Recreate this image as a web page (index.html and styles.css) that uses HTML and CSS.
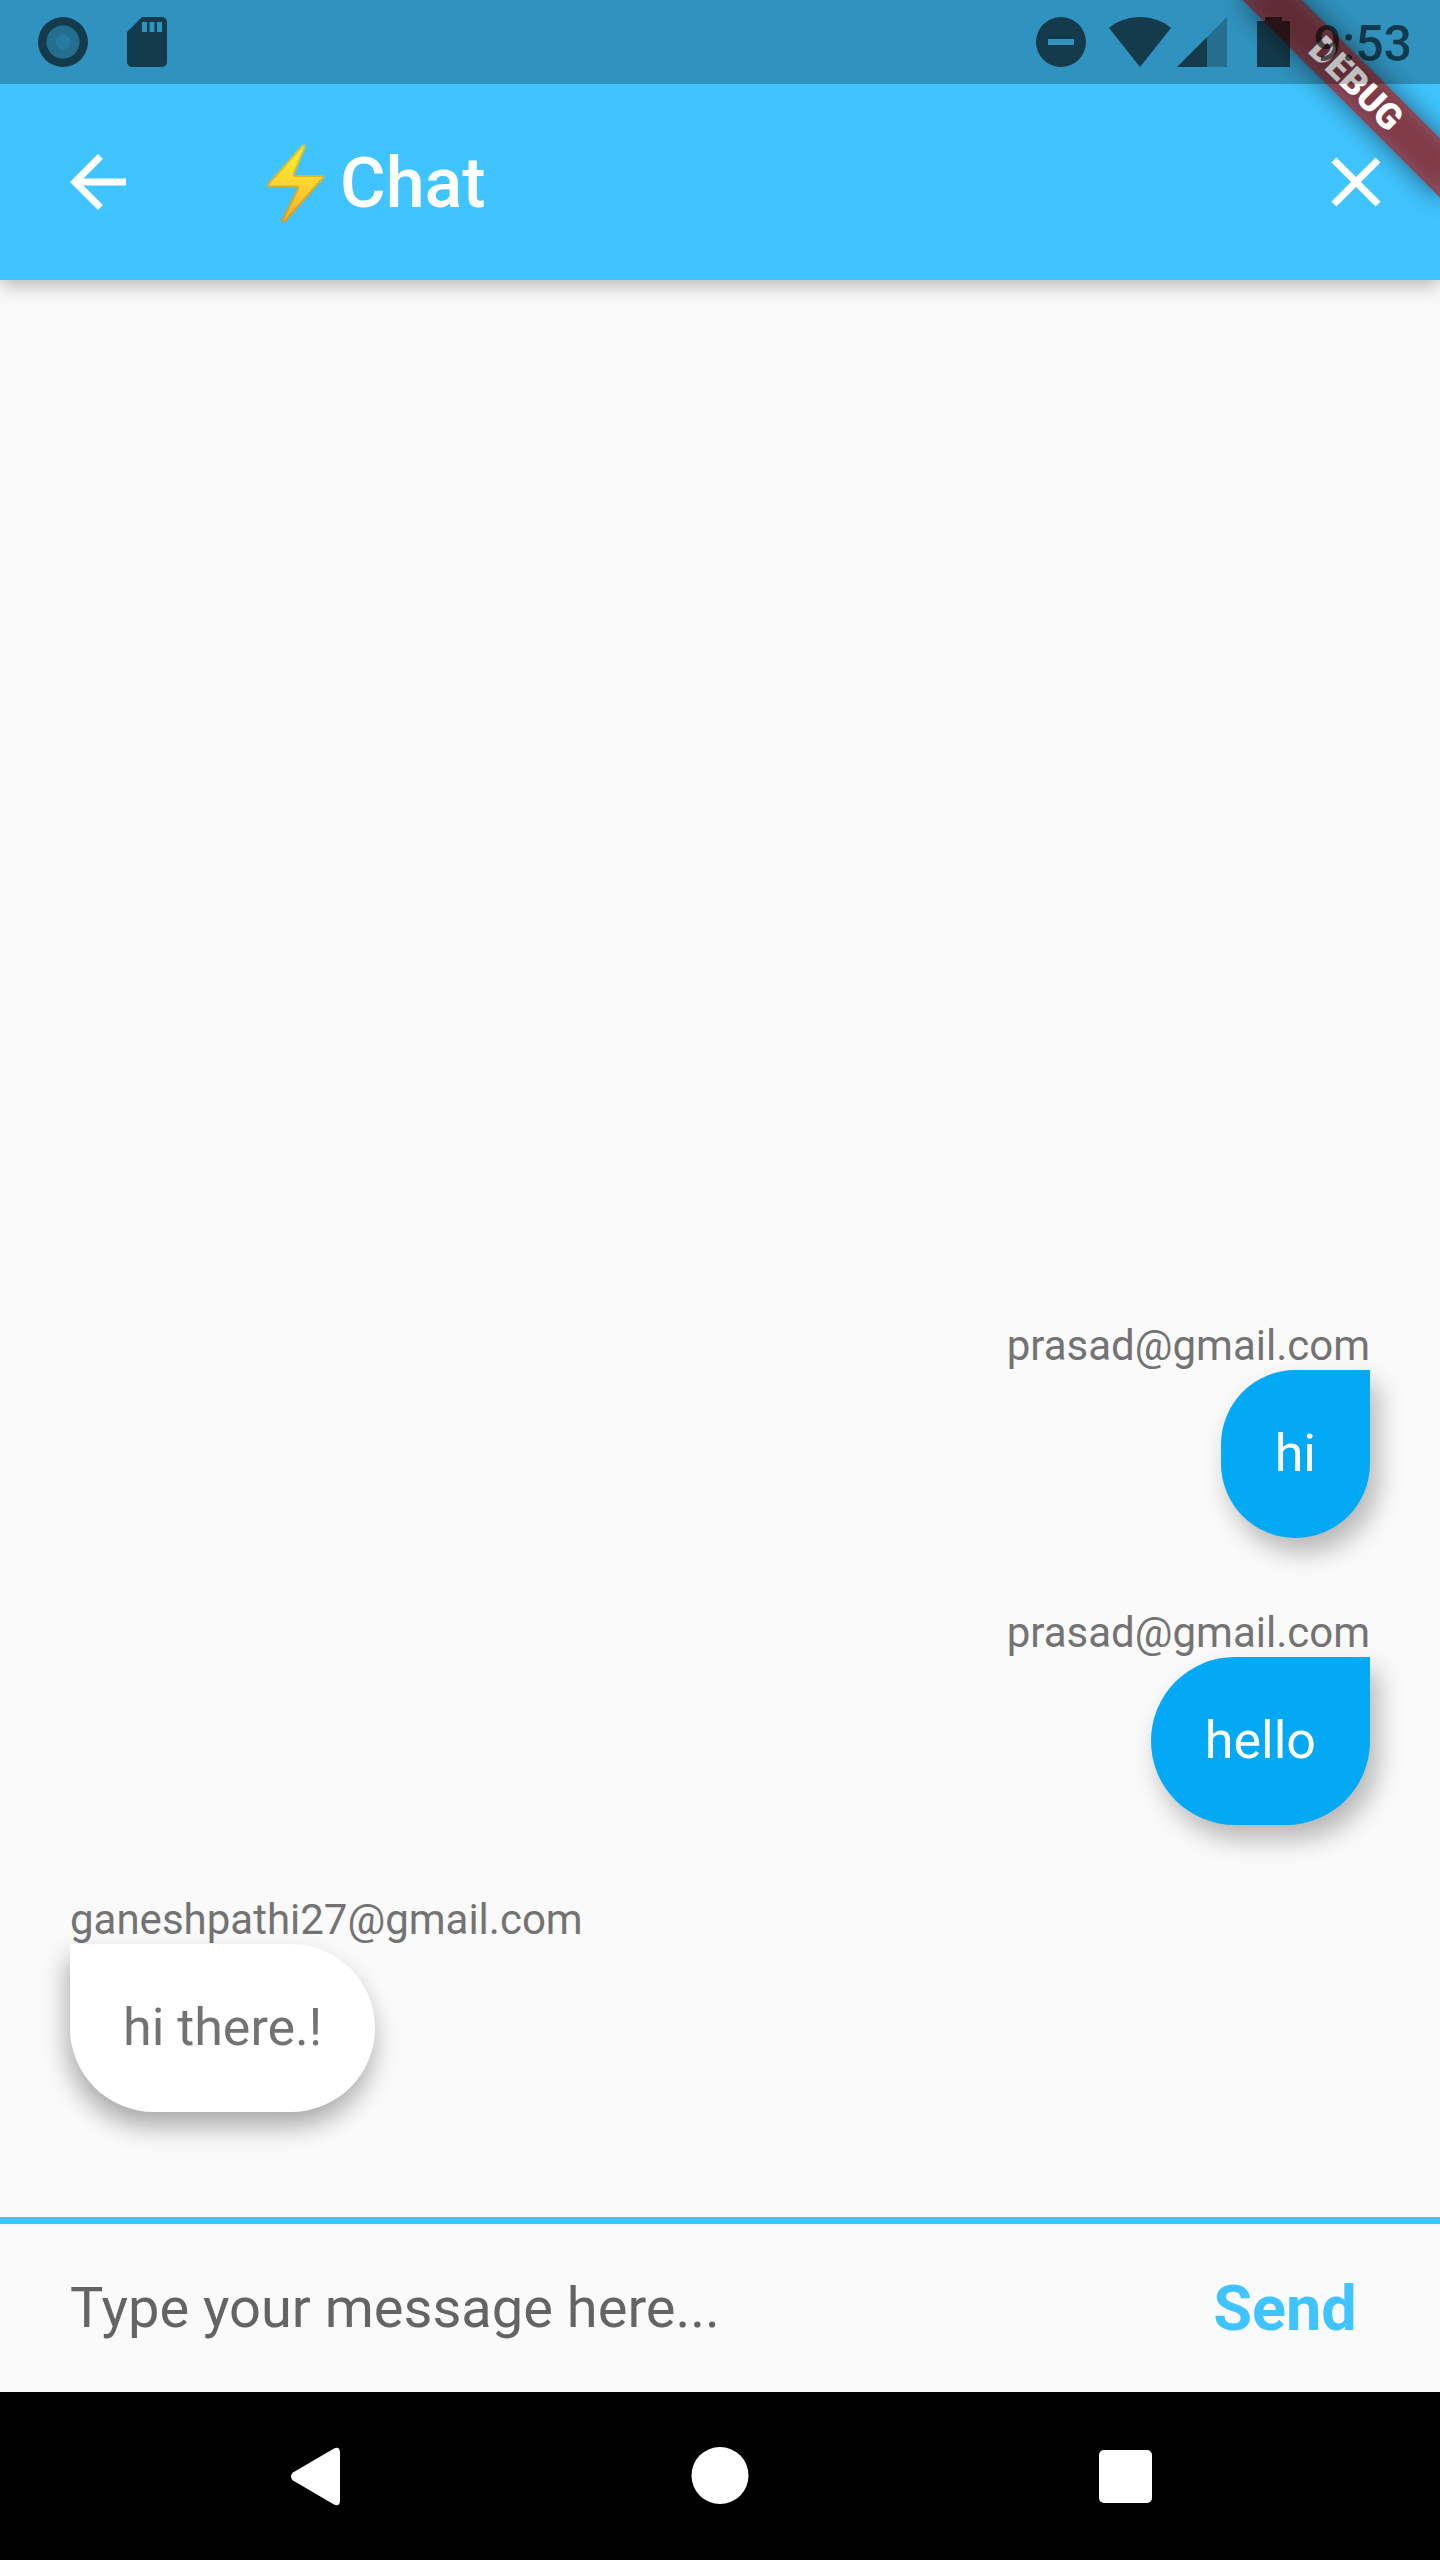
FILE: index.html
```html
<!DOCTYPE html>
<html lang="en">
<head>
<meta charset="utf-8">
<meta name="viewport" content="width=device-width, initial-scale=1">
<title>Chat</title>
<link rel="stylesheet" href="styles.css">
</head>
<body>
<div class="screen">
  <header class="top">
    <div class="status">
      <div class="status-group status-left">
        <svg class="s-icon" width="50" height="50" viewBox="0 0 50 50" aria-hidden="true">
          <path fill-rule="evenodd" fill-opacity=".6" d="M25 0a25 25 0 1 0 0 50a25 25 0 1 0 0-50zM25 8.500a16.500 16.500 0 1 1 0 33a16.500 16.500 0 1 1 0-33z"/>
          <path fill-rule="evenodd" fill-opacity=".25" d="M25 8.500a16.500 16.500 0 1 0 0 33a16.500 16.500 0 1 0 0-33zM25 17.500a7.500 7.500 0 1 1 0 15a7.500 7.500 0 1 1 0-15z"/>
          <circle cx="25" cy="25" r="7.500" fill-opacity=".16"/>
        </svg>
        <svg class="s-icon" width="40" height="50" viewBox="0 0 40 50" aria-hidden="true">
          <path fill-rule="evenodd" fill-opacity=".6" d="M15 0H35a5 5 0 0 1 5 5V45a5 5 0 0 1-5 5H5a5 5 0 0 1-5-5V15zM15 5v10h5V5zM22.500 5v10h5V5zM30 5v10h5V5z"/>
        </svg>
      </div>
      <div class="status-group status-right">
        <svg class="s-icon" width="50" height="50" viewBox="0 0 50 50" aria-hidden="true">
          <path fill-rule="evenodd" fill-opacity=".6" d="M25 0a25 25 0 1 0 0 50a25 25 0 1 0 0-50zM12 22h26v6H12z"/>
        </svg>
        <div class="radios">
          <svg class="s-icon" width="62" height="50" viewBox="0 0 62 50" aria-hidden="true">
            <path fill-opacity=".6" d="M31 50L0 11C8 4 19 0 31 0s23 4 31 11z"/>
          </svg>
          <svg class="s-icon" width="50" height="50" viewBox="0 0 50 50" aria-hidden="true">
            <path fill-opacity=".25" d="M30 20L50 0V50H30z"/>
            <path fill-opacity=".6" d="M0 50L30 20V50z"/>
          </svg>
        </div>
        <div class="power">
          <svg class="s-icon" width="33" height="50" viewBox="0 0 33 50" aria-hidden="true">
            <path fill-opacity=".6" d="M8 0H25V4H33V50H0V4H8z"/>
          </svg>
          <time class="clock">9:53</time>
        </div>
      </div>
    </div>
    <div class="appbar">
      <button class="icon-button back" aria-label="Back">
        <svg width="84" height="84" viewBox="0 0 24 24" aria-hidden="true"><path fill="#fff" d="M20 11H7.830l5.590-5.590L12 4l-8 8 8 8 1.410-1.410L7.830 13H20v-2z"/></svg>
      </button>
      <h1 class="title">
        <svg class="bolt" width="88" height="80" viewBox="0 0 88 80" aria-hidden="true">
          <defs>
            <linearGradient id="boltFill" x1="0" y1="0" x2="0" y2="1">
              <stop offset=".1" stop-color="#feea34"/><stop offset=".5" stop-color="#fdd52f"/><stop offset=".9" stop-color="#fbb52c"/>
            </linearGradient>
            <linearGradient id="boltEdge" x1="0" y1="0" x2="0" y2="1">
              <stop offset="0" stop-color="#dcc830"/><stop offset="1" stop-color="#d59b22"/>
            </linearGradient>
          </defs>
          <path fill="url(#boltFill)" stroke="url(#boltEdge)" stroke-width="2" stroke-linejoin="round" d="M50.500 3L16.500 41Q15 43.500 17.500 43.500H44.500Q46.500 43.500 46 46L30.500 77Q30 79.500 33 78L70.500 35.500Q72 33 69.500 33H43.500Q41.500 33 42 30.500L52.500 4.500Q53 1.500 50.500 3z"/>
        </svg>
        <span>Chat</span>
      </h1>
      <button class="icon-button close" aria-label="Close">
        <svg width="84" height="84" viewBox="0 0 24 24" aria-hidden="true"><path fill="#fff" d="M19 6.410L17.590 5 12 10.590 6.410 5 5 6.410 10.590 12 5 17.590 6.410 19 12 13.410 17.590 19 19 17.590 13.410 12z"/></svg>
      </button>
    </div>
    <div class="banner-clip">
      <div class="banner">DEBUG</div>
    </div>
  </header>

  <main class="messages">
    <article class="message mine">
      <div class="sender">prasad@gmail.com</div>
      <p class="bubble">hi</p>
    </article>
    <article class="message mine">
      <div class="sender">prasad@gmail.com</div>
      <p class="bubble">hello</p>
    </article>
    <article class="message theirs">
      <div class="sender">ganeshpathi27@gmail.com</div>
      <p class="bubble">hi there.!</p>
    </article>
  </main>

  <form class="composer">
    <input class="field" type="text" aria-label="Message" placeholder="Type your message here...">
    <button class="send" type="button">Send</button>
  </form>

  <nav class="navbar" aria-label="System">
    <div class="nav-inner">
      <button class="nav-button" aria-label="Back">
        <svg width="60" height="60" viewBox="0 0 60 60" aria-hidden="true"><path fill="#fff" d="M8 26.500L49 2.500Q54.500 0 55 6V55Q54.500 61 49 58.500L8 34.500Q4 30.500 8 26.500z"/></svg>
      </button>
      <button class="nav-button" aria-label="Home">
        <svg width="60" height="60" viewBox="0 0 60 60" aria-hidden="true"><circle cx="30" cy="29.500" r="28.500" fill="#fff"/></svg>
      </button>
      <button class="nav-button" aria-label="Recent apps">
        <svg width="60" height="60" viewBox="0 0 60 60" aria-hidden="true"><rect x="4" y="4" width="53" height="53" rx="5" fill="#fff"/></svg>
      </button>
    </div>
  </nav>
</div>
</body>
</html>
```

FILE: styles.css
```css
* {
  box-sizing: border-box;
}

body {
  margin: 0;
  background: #fafafa;
  font-family: Roboto, "Noto Sans", sans-serif;
}

button {
  margin: 0;
  padding: 0;
  border: 0;
  background: none;
  font-family: inherit;
  cursor: pointer;
}

svg {
  display: block;
  flex: none;
}

.screen {
  display: flex;
  flex-direction: column;
  min-height: 100vh;
}

/* Header: status bar and app bar */
.top {
  position: relative;
  background: #40c4ff;
  box-shadow: 0 6px 18px rgba(0, 0, 0, 0.26);
}

.status {
  position: relative;
  z-index: 2;
  display: flex;
  justify-content: space-between;
  height: 84px;
  padding: 0 28px 0 38px;
  background: rgba(0, 0, 0, 0.25);
}

.status-group {
  display: flex;
  align-items: center;
}

.status-left {
  gap: 39px;
}

.status-right {
  gap: 23px;
}

.radios {
  display: flex;
  gap: 6px;
}

.power {
  display: flex;
  align-items: center;
  gap: 24px;
  padding-left: 7px;
}

.clock {
  padding-top: 4px;
  color: rgba(0, 0, 0, 0.6);
  font-size: 50px;
  font-weight: 500;
  line-height: 80px;
}

.appbar {
  display: flex;
  align-items: center;
  height: 196px;
}

.icon-button {
  display: flex;
  align-items: center;
  justify-content: center;
  height: 196px;
}

.back {
  width: 196px;
}

.close {
  width: 168px;
}

.title {
  display: flex;
  flex: 1;
  align-items: center;
  margin: 0;
  padding: 2px 0 0 56px;
  color: #fff;
  font-size: 70px;
  font-weight: 500;
  line-height: 84px;
}

/* Corner ribbon, drawn under the status bar */
.banner-clip {
  position: absolute;
  top: 0;
  right: 0;
  z-index: 1;
  width: 280px;
  height: 280px;
  overflow: hidden;
  pointer-events: none;
}

.banner {
  position: absolute;
  top: 63px;
  right: -56px;
  width: 280px;
  height: 42px;
  color: #fff;
  font-size: 36px;
  font-weight: 900;
  line-height: 42px;
  text-align: center;
  transform: rotate(45deg);
}

.banner::before,
.banner::after {
  content: "";
  position: absolute;
  inset: 0;
  z-index: -1;
}

.banner::before {
  background: rgba(0, 0, 0, 0.5);
  filter: blur(14px);
}

.banner::after {
  background: rgba(183, 28, 28, 0.63);
}

/* Conversation */
.messages {
  display: flex;
  flex: 1;
  flex-direction: column;
  justify-content: flex-end;
  padding: 70px 35px;
}

.message {
  display: flex;
  flex-direction: column;
  align-items: flex-start;
  padding: 35px;
}

.mine {
  align-items: flex-end;
}

.sender {
  color: #737373;
  font-size: 42px;
  line-height: 49px;
}

.bubble {
  margin: 0;
  padding: 53px;
  border-radius: 0 105px 105px 105px;
  background: #fff;
  box-shadow: -2px 14px 26px rgba(0, 0, 0, 0.33);
  color: #737373;
  font-size: 52px;
  line-height: 62px;
}

.mine .bubble {
  padding: 53px 54px;
  border-radius: 105px 0 105px 105px;
  background: #03a9f4;
  box-shadow: 8px 14px 26px rgba(0, 0, 0, 0.28);
  color: #fff;
}

/* Composer */
.composer {
  display: flex;
  align-items: center;
  border-top: 7px solid #40c4ff;
}

.field {
  flex: 1;
  min-width: 0;
  height: 168px;
  padding: 0 70px;
  border: 0;
  outline: 0;
  background: transparent;
  color: #212121;
  font-family: inherit;
  font-size: 56px;
}

.field::placeholder {
  color: #646464;
  opacity: 1;
}

.send {
  width: 310px;
  height: 168px;
  color: #40c4ff;
  font-size: 63px;
  font-weight: 700;
}

/* System navigation */
.navbar {
  background: #000;
}

.nav-inner {
  display: flex;
  max-width: 1215px;
  margin: 0 auto;
}

.nav-button {
  display: flex;
  flex: 1;
  align-items: center;
  justify-content: center;
  height: 168px;
}
```
